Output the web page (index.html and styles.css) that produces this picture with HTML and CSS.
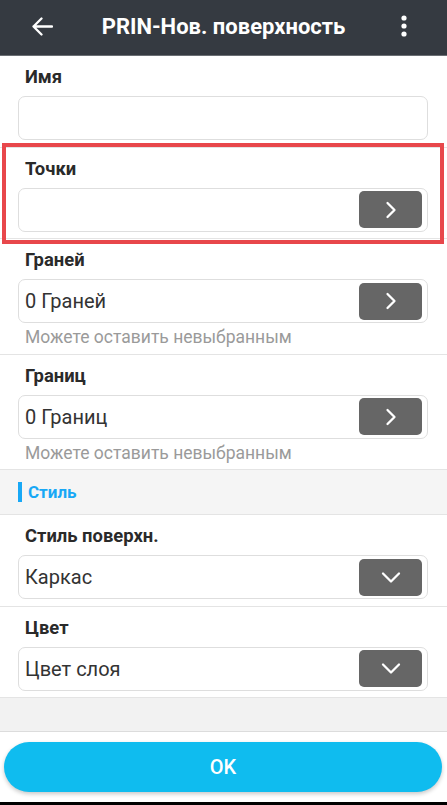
FILE: index.html
```html
<!DOCTYPE html>
<html lang="ru">
<head>
<meta charset="utf-8">
<title>PRIN-Нов. поверхность</title>
<link rel="stylesheet" href="styles.css">
</head>
<body>
<div class="screen">
  <header class="topbar">
    <div class="topbar-left">
      <svg class="back" width="22" height="19" viewBox="0 0 22 19"><path d="M21 9.5H2.5M10.5 1.5L2.5 9.5L10.5 17.5" fill="none" stroke="#fff" stroke-width="2.3" stroke-linecap="round" stroke-linejoin="round"/></svg>
    </div>
    <h1 class="title">PRIN-Нов. поверхность</h1>
    <div class="topbar-right">
      <svg class="dots" width="6" height="22" viewBox="0 0 6 22"><circle cx="3" cy="3" r="2.6" fill="#fff"/><circle cx="3" cy="11" r="2.6" fill="#fff"/><circle cx="3" cy="19" r="2.6" fill="#fff"/></svg>
    </div>
  </header>

  <main class="form">
    <section class="group">
      <div class="label">Имя</div>
      <div class="field"></div>
    </section>

    <section class="group highlighted">
      <div class="label">Точки</div>
      <div class="field">
        <span class="value"></span>
        <span class="btn"><svg width="12" height="18" viewBox="0 0 12 18"><polyline points="2.5,2 9.5,9 2.5,16" fill="none" stroke="#fff" stroke-width="2.3" stroke-linecap="round" stroke-linejoin="round"/></svg></span>
      </div>
    </section>

    <section class="group">
      <div class="label">Граней</div>
      <div class="field">
        <span class="value">0 Граней</span>
        <span class="btn"><svg width="12" height="18" viewBox="0 0 12 18"><polyline points="2.5,2 9.5,9 2.5,16" fill="none" stroke="#fff" stroke-width="2.3" stroke-linecap="round" stroke-linejoin="round"/></svg></span>
      </div>
      <div class="hint">Можете оставить невыбранным</div>
    </section>

    <section class="group">
      <div class="label">Границ</div>
      <div class="field">
        <span class="value">0 Границ</span>
        <span class="btn"><svg width="12" height="18" viewBox="0 0 12 18"><polyline points="2.5,2 9.5,9 2.5,16" fill="none" stroke="#fff" stroke-width="2.3" stroke-linecap="round" stroke-linejoin="round"/></svg></span>
      </div>
      <div class="hint">Можете оставить невыбранным</div>
    </section>

    <div class="section-head"><span class="bar"></span><span class="section-title">Стиль</span></div>

    <section class="group">
      <div class="label">Стиль поверхн.</div>
      <div class="field">
        <span class="value">Каркас</span>
        <span class="btn"><svg width="20" height="13" viewBox="0 0 20 13"><polyline points="2,2.5 10,10.5 18,2.5" fill="none" stroke="#fff" stroke-width="2.3" stroke-linecap="round" stroke-linejoin="round"/></svg></span>
      </div>
    </section>

    <section class="group">
      <div class="label">Цвет</div>
      <div class="field">
        <span class="value">Цвет слоя</span>
        <span class="btn"><svg width="20" height="13" viewBox="0 0 20 13"><polyline points="2,2.5 10,10.5 18,2.5" fill="none" stroke="#fff" stroke-width="2.3" stroke-linecap="round" stroke-linejoin="round"/></svg></span>
      </div>
    </section>

    <div class="filler"></div>
  </main>

  <footer class="footer">
    <button class="ok">OK</button>
  </footer>
  <div class="navbar"></div>
</div>
</body>
</html>
```

FILE: styles.css
```css
* { box-sizing: border-box; }
html, body { margin: 0; padding: 0; }
body {
  font-family: Roboto, "Noto Sans", "Liberation Sans", sans-serif;
  background: #fff;
  color: #333;
}
.screen {
  height: 805px;
  display: flex;
  flex-direction: column;
  overflow: hidden;
}
.topbar {
  height: 56px;
  flex: none;
  background: #353a41;
  border-bottom: 1px solid #6a6e73;
  display: grid;
  grid-template-columns: 1fr auto 1fr;
  align-items: center;
}
.topbar-left { padding-left: 31px; display: flex; align-items: center; }
.back { display: block; margin-top: -3px; }
.title {
  margin: 0;
  color: #fff;
  font-size: 22px;
  font-weight: 700;
  line-height: 26px;
  margin-top: -2px;
}
.topbar-right { display: flex; justify-content: flex-end; padding-right: 40px; }
.dots { display: block; margin-top: -3px; }

.form {
  flex: 1;
  display: flex;
  flex-direction: column;
}
.group {
  padding: 10px 19px 6.5px 18px;
  border-bottom: 1px solid #e4e4e4;
  position: relative;
}
.label {
  padding-left: 7px;
  font-size: 18.4px;
  font-weight: 700;
  line-height: 22px;
  color: #2a2a2a;
  margin-bottom: 8px;
}
.field {
  height: 44px;
  border: 1px solid #dedede;
  border-radius: 7px;
  display: flex;
  align-items: center;
  padding: 0 5px 0 6px;
}
.value {
  flex: 1;
  font-size: 20px;
  color: #333;
}
.btn {
  width: 63px;
  height: 37px;
  background: #666;
  border-radius: 5px;
  display: flex;
  align-items: center;
  justify-content: center;
}
.btn svg { display: block; }
.hint {
  margin-top: 4px;
  padding-left: 7px;
  font-size: 17.5px;
  line-height: 20px;
  color: #9a9a9a;
}
.highlighted::after {
  content: "";
  position: absolute;
  top: -5px;
  bottom: -6px;
  left: 2px;
  right: 3px;
  border: 4px solid #e8474b;
  pointer-events: none;
}
.section-head {
  height: 45px;
  background: #f5f5f5;
  border-bottom: 1px solid #e4e4e4;
  display: flex;
  align-items: center;
  padding-left: 18px;
}
.bar {
  width: 4px;
  height: 20px;
  background: #18a8f6;
  margin-right: 6px;
}
.section-title {
  font-size: 17px;
  font-weight: 700;
  color: #18a8f6;
}
.filler {
  flex: 1;
  background: #f2f2f2;
  border-bottom: 1px solid #dcdcdc;
}
.footer {
  flex: none;
  height: 70px;
  padding: 10px 5px 10px 4px;
  background: #fff;
}
.ok {
  width: 100%;
  height: 50px;
  border: none;
  border-radius: 25px;
  background: #0fbcef;
  color: #fff;
  font-family: Roboto, "Noto Sans", sans-serif;
  font-size: 20px;
  font-weight: 500;
  box-shadow: 0 2px 4px rgba(0,0,0,0.22);
}
.navbar {
  flex: none;
  height: 3px;
  background: #000;
}
```
